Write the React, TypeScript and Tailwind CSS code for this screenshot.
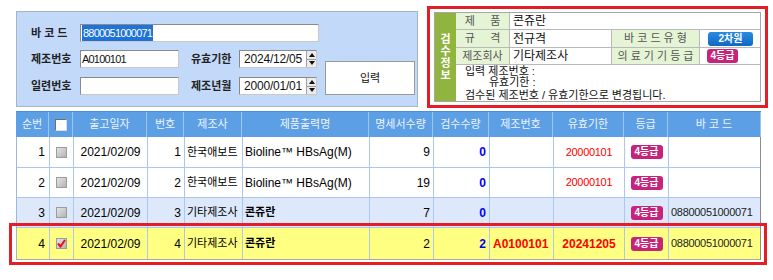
import React from "react";

const font = "font-['Liberation_Sans','Noto_Sans_CJK_KR',sans-serif]";
const cols =
  "grid-cols-[33px_24px_74px_37px_58px_127px_64px_56px_64px_71px_44px_93px]";

type Row = {
  no: number;
  date: string;
  num: number;
  maker: string;
  name: string;
  bold: boolean;
  qty: number;
  chk: number;
  lot: string;
  exp: string;
  barcode: string;
  bg: string;
  h: string;
  checked: boolean;
};

const rows: Row[] = [
  { no: 1, date: "2021/02/09", num: 1, maker: "한국애보트", name: "Bioline™ HBsAg(M)", bold: false, qty: 9, chk: 0, lot: "", exp: "20000101", barcode: "", bg: "bg-white", h: "h-[31px]", checked: false },
  { no: 2, date: "2021/02/09", num: 2, maker: "한국애보트", name: "Bioline™ HBsAg(M)", bold: false, qty: 19, chk: 0, lot: "", exp: "20000101", barcode: "", bg: "bg-white", h: "h-[30px]", checked: false },
  { no: 3, date: "2021/02/09", num: 3, maker: "기타제조사", name: "콘쥬란", bold: true, qty: 7, chk: 0, lot: "", exp: "", barcode: "08800051000071", bg: "bg-[#dde9fb]", h: "h-[30px]", checked: false },
  { no: 4, date: "2021/02/09", num: 4, maker: "기타제조사", name: "콘쥬란", bold: true, qty: 2, chk: 2, lot: "A0100101", exp: "20241205", barcode: "08800051000071", bg: "bg-[#ffff82]", h: "h-[32px]", checked: true },
];

function Spin() {
  return (
    <div className="flex flex-col w-[10px] h-full border-l border-[#a0a0a0]">
      <div className="flex-1 flex items-center justify-center bg-[#ececec] border-b border-[#9a9a9a]">
        <svg width="6" height="4" viewBox="0 0 6 4">
          <path d="M0 4 L3 0 L6 4 Z" fill="#111" />
        </svg>
      </div>
      <div className="flex-1 flex items-center justify-center bg-[#ececec]">
        <svg width="6" height="4" viewBox="0 0 6 4">
          <path d="M0 0 L3 4 L6 0 Z" fill="#111" />
        </svg>
      </div>
    </div>
  );
}

function DateBox({ value }: { value: string }) {
  return (
    <div className="flex w-[78px] h-[18px] bg-white border border-[#8a8a8a] border-r-[#c8c8c8] border-b-[#c8c8c8]">
      <div className="flex-1 flex items-center pl-[4px] text-[12px] tracking-[-0.2px] text-[#111] whitespace-nowrap overflow-hidden">{value}</div>
      <Spin />
    </div>
  );
}

function TextBox({ w, children }: { w: string; children?: React.ReactNode }) {
  return (
    <div className={`${w} h-[18px] bg-white border border-[#8a8a8a] border-r-[#c8c8c8] border-b-[#c8c8c8] flex items-center pl-[1px] text-[11px] tracking-[-0.8px] text-[#111]`}>
      {children}
    </div>
  );
}

function Label({ children, w }: { children: React.ReactNode; w: string }) {
  return <div className={`${w} text-[11px] font-bold text-[#222] whitespace-pre`}>{children}</div>;
}

function Badge({ children, color, w }: { children: React.ReactNode; color: string; w: string }) {
  return (
    <span className={`${color} ${w} h-[14px] rounded-[3px] flex items-center justify-center text-white text-[10px] font-bold leading-none`}>
      {children}
    </span>
  );
}

function Check({ checked }: { checked: boolean }) {
  return (
    <div className="w-[11px] h-[11px] border border-[#9c9c9c] bg-gradient-to-br from-[#e4e4e4] to-[#b4b4b4] flex items-center justify-center">
      {checked && (
        <svg width="9" height="9" viewBox="0 0 9 9">
          <path d="M1 4.5 L3.5 7.5 L8 1" stroke="#e8101c" strokeWidth="2" fill="none" />
        </svg>
      )}
    </div>
  );
}

const hc = "flex items-center justify-center border-r border-[#9cc6f2] text-[11px] text-[#eef5ff] whitespace-nowrap";
const bc = "flex items-center border-r border-[#a9c7ef] whitespace-nowrap overflow-hidden";

function InfoLabel({ children, extra = "" }: { children: React.ReactNode; extra?: string }) {
  return (
    <div className={`bg-[#e6f4d6] border-r border-b border-[#b9b9b9] flex items-center justify-center text-[11px] text-[#555] whitespace-pre ${extra}`}>
      {children}
    </div>
  );
}

export default function App() {
  return (
    <div className={`w-[773px] h-[280px] bg-white ${font} relative`}>
      <div className="flex pt-[6px]">
        {/* input panel */}
        <div className="ml-[16px] mt-[5px] w-[402px] h-[96px] bg-[#c2d9f9] border border-[#a7b4c4] pl-[14px] pt-[12px]">
          <div className="flex items-center h-[18px]">
            <Label w="w-[49px]">{"바 코 드"}</Label>
            <TextBox w="w-[239px]">
              <span className="bg-[#1e73d8] text-white px-[1px]">8800051000071</span>
            </TextBox>
          </div>
          <div className="flex mt-[8px]">
            <div className="flex flex-col gap-[9px]">
              <div className="flex items-center h-[18px]">
                <Label w="w-[49px]">제조번호</Label>
                <TextBox w="w-[99px]">A0100101</TextBox>
                <Label w="w-[48px] ml-[12px]">유효기한</Label>
                <DateBox value="2024/12/05" />
              </div>
              <div className="flex items-center h-[18px]">
                <Label w="w-[49px]">일련번호</Label>
                <TextBox w="w-[99px]" />
                <Label w="w-[48px] ml-[12px]">제조년월</Label>
                <DateBox value="2000/01/01" />
              </div>
            </div>
            <button className="ml-[8px] self-end w-[90px] h-[34px] bg-white border border-[#9a9a9a] text-[11px] text-[#111]">
              입력
            </button>
          </div>
        </div>

        {/* info panel */}
        <div className="ml-[9px] w-[341px] h-[102px] border-[3px] border-[#e41e26] bg-white px-[4px] pt-[3px]">
          <div className="flex h-[90px] border border-[#a6a6a6]">
            <div className="w-[21px] bg-[#8fb53f] flex flex-col items-center justify-center text-white text-[11px] font-bold leading-[12px]">
              <span>검</span>
              <span>수</span>
              <span>정</span>
              <span>보</span>
            </div>
            <div className="flex-1 grid grid-cols-[54px_102px_88px_1fr] grid-rows-[17px_18px_17px_1fr]">
              <InfoLabel>{"제     품"}</InfoLabel>
              <div className="col-span-3 border-b border-[#b9b9b9] flex items-center pl-[3px] text-[12px] text-[#111]">콘쥬란</div>

              <InfoLabel>{"규     격"}</InfoLabel>
              <div className="border-r border-b border-[#b9b9b9] flex items-center pl-[3px] text-[12px] text-[#111]">전규격</div>
              <InfoLabel>{"바 코 드 유 형"}</InfoLabel>
              <div className="border-b border-[#b9b9b9] flex items-center pl-[8px]">
                <Badge color="bg-gradient-to-b from-[#2a8ae0] to-[#0f69c4]" w="w-[45px]">2차원</Badge>
              </div>

              <InfoLabel>제조회사</InfoLabel>
              <div className="border-r border-b border-[#b9b9b9] flex items-center pl-[3px] text-[12px] text-[#111]">기타제조사</div>
              <InfoLabel>{"의 료 기 기 등 급"}</InfoLabel>
              <div className="border-b border-[#b9b9b9] flex items-center pl-[7px]">
                <Badge color="bg-[#c8237a]" w="w-[31px]">4등급</Badge>
              </div>

              <div className="col-span-4 pl-[9px] pt-[1px] text-[11px] leading-[11px] text-[#111]">
                <div>입력 제조번호 :</div>
                <div className="pl-[24px]">유효기한 :</div>
                <div className="mt-[2px]">검수된 제조번호 / 유효기한으로 변경됩니다.</div>
              </div>
            </div>
          </div>
        </div>
      </div>

      {/* grid */}
      <div className="relative ml-[16px] mt-[3px] w-[745px]">
        <div className={`grid ${cols} h-[26px] bg-[#5c9fe4] border-t border-[#4b8fd8]`}>
          <div className={hc}>순번</div>
          <div className={hc}>
            <div className="w-[12px] h-[12px] bg-white border border-[#6f6f6f] border-r-[#dcdcdc] border-b-[#dcdcdc]" />
          </div>
          <div className={hc}>출고일자</div>
          <div className={hc}>번호</div>
          <div className={hc}>제조사</div>
          <div className={hc}>제품출력명</div>
          <div className={hc}>명세서수량</div>
          <div className={hc}>검수수량</div>
          <div className={hc}>제조번호</div>
          <div className={hc}>유효기한</div>
          <div className={hc}>등급</div>
          <div className={`${hc} whitespace-pre`}>{"바 코 드"}</div>
        </div>
        <div className="border-l border-[#9fb6d6] border-r border-r-[#8c8c8c]">
          {rows.map((r) => (
            <div key={r.no} className={`grid ${cols} ${r.h} ${r.bg} border-b ${r.no === 4 ? "border-[#a8a8a8]" : "border-[#a9c7ef]"} text-[12px] text-black`}>
              <div className={`${bc} justify-end pr-[4px]`}>{r.no}</div>
              <div className={`${bc} justify-center`}>
                <Check checked={r.checked} />
              </div>
              <div className={`${bc} justify-center`}>{r.date}</div>
              <div className={`${bc} justify-end pr-[3px]`}>{r.num}</div>
              <div className={`${bc} pl-[2px] text-[11px]`}>{r.maker}</div>
              <div className={`${bc} pl-[2px] ${r.bold ? "font-bold text-[11px]" : ""}`}>{r.name}</div>
              <div className={`${bc} justify-end pr-[3px]`}>{r.qty}</div>
              <div className={`${bc} justify-end pr-[3px] font-bold text-[#0000ff]`}>{r.chk}</div>
              <div className={`${bc} pl-[3px] font-bold text-[#ff0000]`}>{r.lot}</div>
              <div className={`${bc} justify-center text-[#ff0000] ${r.no === 4 ? "font-bold" : "text-[11px] tracking-[-0.3px]"}`}>{r.exp}</div>
              <div className={`${bc} justify-center`}>
                <Badge color="bg-[#c8237a]" w="w-[32px]">4등급</Badge>
              </div>
              <div className={`${bc} border-r-0 pl-[2px] text-[11px] tracking-[-0.3px] text-[#222]`}>{r.barcode}</div>
            </div>
          ))}
        </div>
        {/* selected row highlight */}
        <div className="absolute left-[-7px] top-[112px] w-[758px] h-[42px] border-[3px] border-[#e41e26] pointer-events-none" />
      </div>
    </div>
  );
}
